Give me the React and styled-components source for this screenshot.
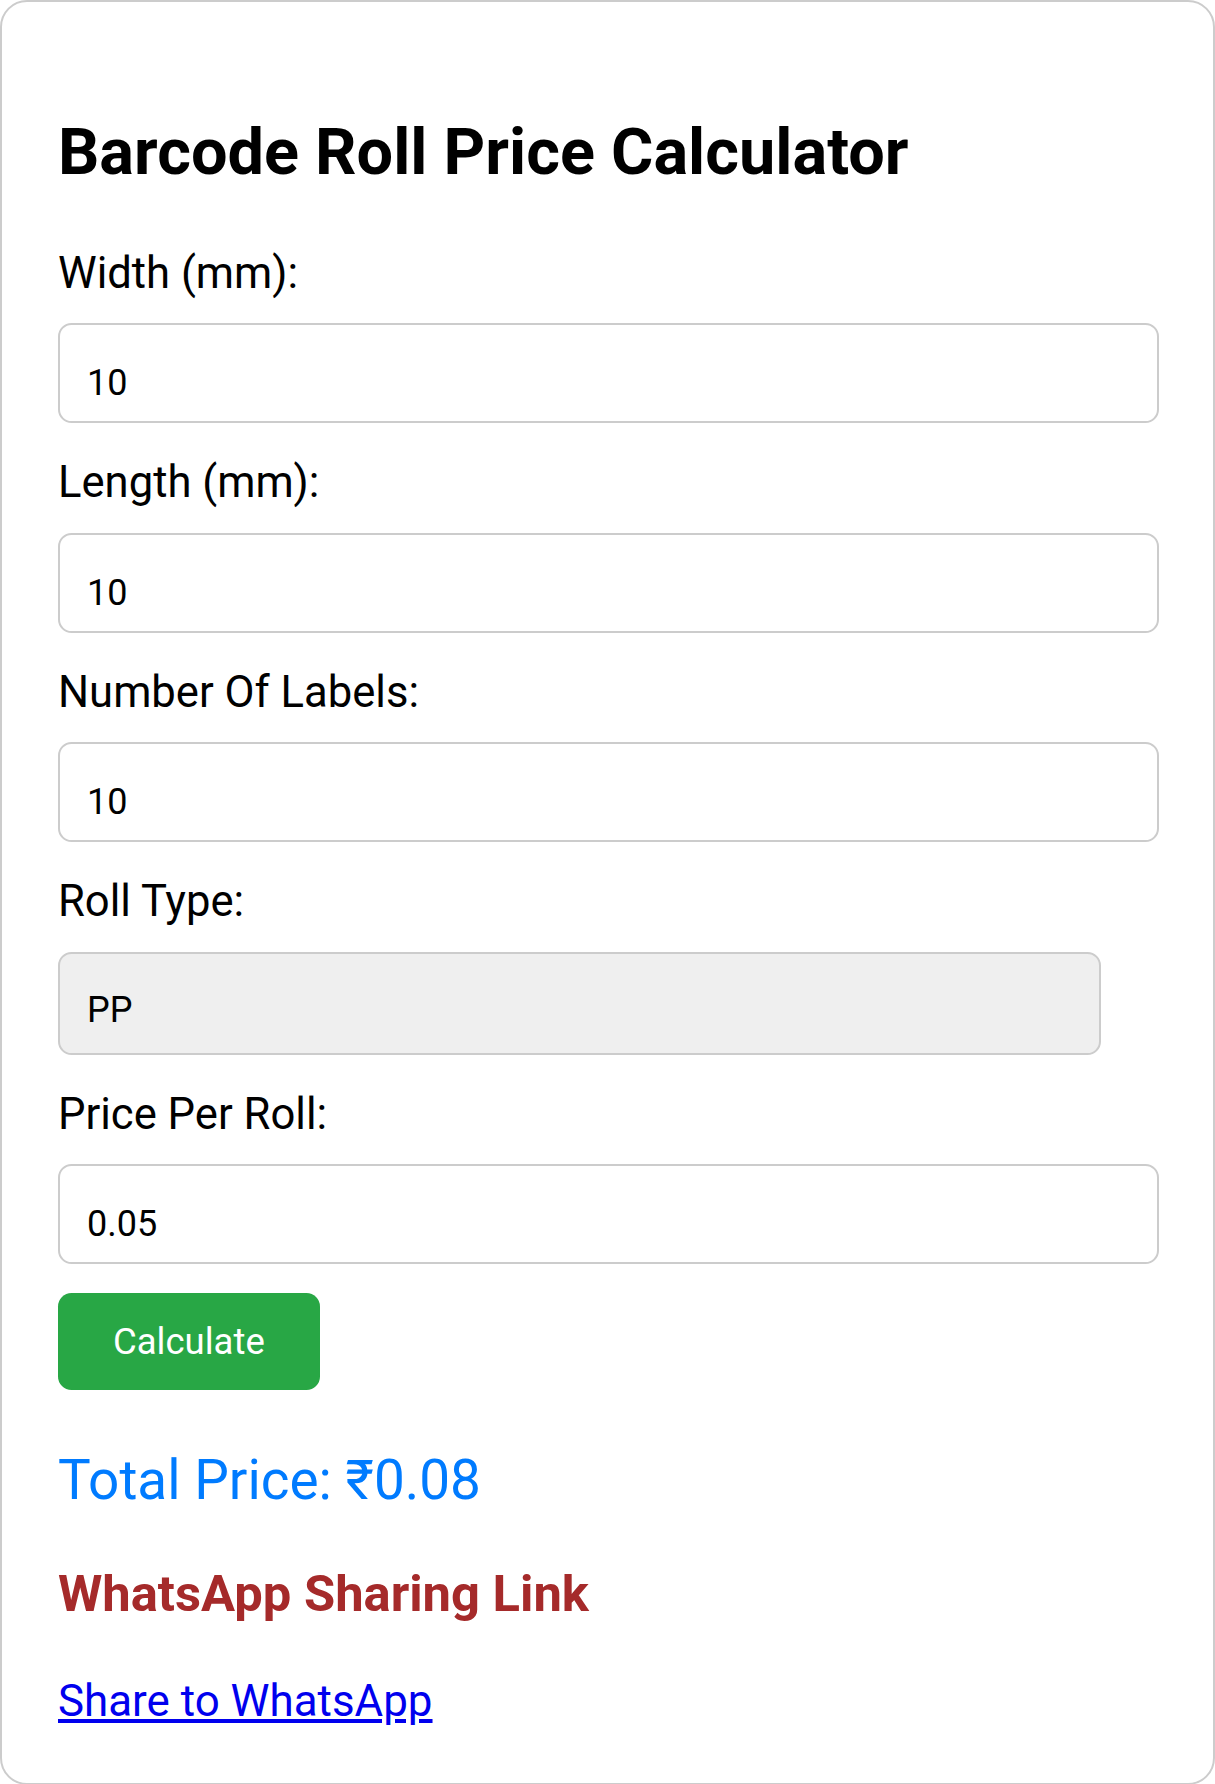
import styled, { createGlobalStyle } from 'styled-components'

const GlobalStyle = createGlobalStyle`
    body {
        margin: 0;
        background: #fff;
        font-family: Roboto, "Liberation Sans", sans-serif;
    }
`

const Card = styled.div`
    box-sizing: border-box;
    width: 1215px;
    border: 2px solid #ccc;
    border-radius: 27px;
    padding: 54px 54px 56px 56px;
    background: #fff;
    display: flex;
    flex-direction: column;
    align-items: flex-start;
`

const Title = styled.h1`
    margin: 58px 0 0;
    font-size: 64.8px;
    font-weight: 700;
    color: #000;
`

const Form = styled.div`
    width: 1043px;
    margin-top: 58px;
    display: flex;
    flex-direction: column;
    gap: 34px;
`

const Field = styled.div`
    display: flex;
    flex-direction: column;
    align-items: flex-start;
    gap: 24.4px;
`

const Label = styled.label`
    font-size: 43.6px;
    color: #000;
`

const Input = styled.input`
    box-sizing: border-box;
    width: 1101px;
    height: 100px;
    padding: 37px 27px 17px;
    border: 2px solid #ccc;
    border-radius: 13.5px;
    font-family: Roboto, "Liberation Sans", sans-serif;
    font-size: 36px;
    color: #000;
    background: #fff;
    outline: none;
`

const Select = styled.select`
    box-sizing: border-box;
    width: 1043px;
    height: 103px;
    padding: 14px 27px 0;
    border: 2px solid #ccc;
    border-radius: 13.5px;
    font-family: Roboto, "Liberation Sans", sans-serif;
    font-size: 36px;
    color: #000;
    background: #efefef;
    appearance: none;
    opacity: 1;
`

const Button = styled.button`
    margin-top: 29px;
    padding: 27px 55px;
    border: none;
    border-radius: 13.5px;
    background: #28a745;
    color: #fff;
    font-family: Roboto, "Liberation Sans", sans-serif;
    font-size: 36.5px;
    cursor: pointer;
`

const Total = styled.p`
    margin: 58px 0 0;
    font-size: 54.9px;
    color: #007bff;
`

const ShareHeading = styled.h3`
    margin: 52px 0 0;
    font-size: 50.7px;
    font-weight: 700;
    color: #a52a2a;
`

const ShareLink = styled.a`
    margin-top: 52px;
    font-size: 43.9px;
    color: #0000ee;
    text-decoration: underline;
`

const fields = [
    { label: 'Width (mm):', value: '10' },
    { label: 'Length (mm):', value: '10' },
    { label: 'Number Of Labels:', value: '10' },
]

const App = () => {
    return (
        <>
            <GlobalStyle />
            <Card>
                <Title>Barcode Roll Price Calculator</Title>

                <Form>
                    {fields.map((f) => (
                        <Field key={f.label}>
                            <Label>{f.label}</Label>
                            <Input type="text" defaultValue={f.value} />
                        </Field>
                    ))}

                    <Field>
                        <Label>Roll Type:</Label>
                        <Select defaultValue="PP" disabled>
                            <option value="PP">PP</option>
                        </Select>
                    </Field>

                    <Field>
                        <Label>Price Per Roll:</Label>
                        <Input type="text" defaultValue="0.05" />
                    </Field>
                </Form>

                <Button>Calculate</Button>

                <Total>Total Price: ₹0.08</Total>

                <ShareHeading>WhatsApp Sharing Link</ShareHeading>

                <ShareLink href="#share">Share to WhatsApp</ShareLink>
            </Card>
        </>
    )
}

export default App
